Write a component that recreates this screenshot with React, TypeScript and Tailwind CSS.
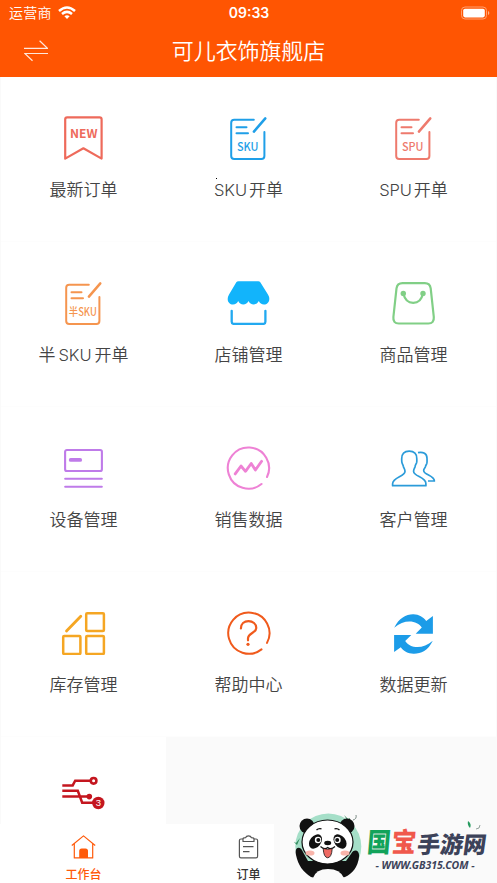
import type { ReactNode } from "react";

const CJK = "font-['Inter','Noto_Sans_CJK_SC',sans-serif]";

function NewOrderIcon() {
  return (
    <svg viewBox="0 0 45 44" className="w-[45px] h-[44px]" fill="none" stroke="#ee6a5b" strokeWidth="2.2" strokeLinejoin="round">
      <path d="M4.2 3.4q0-2 2-2h32.4q2 0 2 2V42.6L22.4 32.3 4.2 42.6Z" />
      <text
        x="9"
        y="21.8"
        fontSize="12"
        fontWeight="700"
        fill="#ee6a5b"
        stroke="none"
        textLength="27.5"
        lengthAdjust="spacingAndGlyphs"
        className="font-['Noto_Sans_CJK_SC',sans-serif]"
      >
        NEW
      </text>
    </svg>
  );
}

function FormIcon({ color, text, wide }: { color: string; text: string; wide?: boolean }) {
  return (
    <svg viewBox="0 0 45 44" className="w-[45px] h-[44px]" fill="none" stroke={color} strokeWidth="2" strokeLinecap="round">
      <path d="M27.8 3.7H8.2q-3 0-3 3V40q0 2.9 3 2.9h27.2q3 0 3-2.9V16" />
      <path d="M39.3 2.4 27.9 15.6" strokeWidth="2.5" />
      <path d="M10.5 11.2h10M10.5 17.3h11.5" />
      <text
        x={wide ? 7.8 : 11}
        y="35"
        fontSize={wide ? 11 : 11.2}
        fontWeight="500"
        fill={color}
        stroke="none"
        textLength={wide ? 28 : 21.5}
        lengthAdjust="spacingAndGlyphs"
        className="font-['Noto_Sans_CJK_SC',sans-serif]"
      >
        {text}
      </text>
    </svg>
  );
}

function StoreIcon() {
  return (
    <svg viewBox="0 0 45 44" className="w-[45px] h-[44px]" fill="none">
      <path
        fill="#12b4fb"
        d="M12.5.2h19.8q1.3 0 2 1.1l7.8 12.5q1.4 2.4 1.2 4.4c-.2 3.2-2.4 5.3-5.3 5.3-2.4 0-4.2-1.3-5.2-3.4-1 2.1-2.8 3.4-5.1 3.4s-4.2-1.3-5.2-3.4c-1 2.1-2.9 3.4-5.2 3.4s-4.1-1.3-5.1-3.4c-1 2.1-2.7 3.4-5.2 3.4-2.9 0-5.2-2.1-5.3-5.3q-.1-2 1.2-4.4l7.4-12.5q.7-1.1 2.2-1.1Z"
      />
      <path d="M5.7 29.8v11q0 2.1 2.1 2.1h29.5q2.1 0 2.1-2.1v-11" stroke="#22a9f0" strokeWidth="2.3" strokeLinecap="round" />
    </svg>
  );
}

function BagIcon() {
  return (
    <svg viewBox="0 0 45 44" className="w-[45px] h-[44px]" fill="none" stroke="#81cf86" strokeWidth="2.2">
      <path d="M11.5 2.2h22.3q5.2 0 5.9 5.2l3.1 28.6q.5 6.5-5.5 6.5H7.8q-6 0-5.4-6.5L5.5 7.4q.7-5.2 6-5.2Z" />
      <path d="M12.3 12.3c1.3 5.9 4.8 9.6 9.9 9.6s8.6-3.7 9.8-9.6" />
      <circle cx="12.3" cy="12.5" r="2.7" fill="#81cf86" stroke="none" />
      <circle cx="32" cy="12.5" r="2.7" fill="#81cf86" stroke="none" />
    </svg>
  );
}

function DeviceIcon() {
  return (
    <svg viewBox="0 0 45 44" className="w-[45px] h-[44px]" fill="none" stroke="#bf7be9" strokeWidth="2.1" strokeLinecap="round">
      <rect x="4.1" y="4" width="36.8" height="21" rx="1.8" />
      <path d="M9.7 13.9h9.5" strokeWidth="3.8" />
      <path d="M4.2 32.7h36.6M4.2 40.7h36.6" />
    </svg>
  );
}

function SalesIcon() {
  return (
    <svg viewBox="0 0 45 44" className="w-[45px] h-[44px]" fill="none" stroke="#ee82d5" strokeWidth="2.1" strokeLinecap="round">
      <path d="M35.5 38A20.6 20.6 0 1 1 41 31" />
      <path d="M9.2 27.9 15 20l4.5 5.3 5.7-7.8 4.2 6.5 6.2-8.7" strokeWidth="2.8" strokeLinejoin="round" />
    </svg>
  );
}

function CustomerIcon() {
  return (
    <svg viewBox="0 0 45 44" className="w-[45px] h-[44px]" fill="none" stroke="#2b9bd9" strokeWidth="1.7" strokeLinejoin="round">
      <path d="M18.2 5.2c5 0 7.8 2.6 7.6 7.5 0 1.6.2 2.6-.2 4-.5 1.5-1.2 2-1.5 3.8-.4 2-1.6 2.5-1.5 5 .1 5 12.5 5.5 12.3 12.2v2H1.6v-2c.1-6.5 12.3-7.2 12.4-12.2 0-2.5-1.2-3-1.6-5-.3-1.8-1-2.3-1.4-3.8-.4-1.4-.3-2.4-.3-4-.1-4.9 2.5-7.5 7.5-7.5Z" />
      <path d="M27 6.6c5.3-1.2 9 1.2 9 5.7 0 2 .3 3.8-.2 5.2-.5 1.3-1.1 1.7-1.4 3.2-.4 1.5-1.9 2-1.7 4 .2 4.2 10.7 4.8 10.7 10.3H37" />
    </svg>
  );
}

function StockIcon() {
  return (
    <svg viewBox="0 0 45 44" className="w-[45px] h-[44px]" fill="none" stroke="#f5a623" strokeWidth="2.5" strokeLinecap="round">
      <rect x="25.2" y="2.2" width="17.7" height="17.7" rx="1" />
      <rect x="2.2" y="25" width="17.2" height="18" rx="1" />
      <rect x="25.2" y="25" width="17.7" height="18" rx="1" />
      <path d="M19.8 5.2 5.5 20" strokeWidth="2.8" />
    </svg>
  );
}

function HelpIcon() {
  return (
    <svg viewBox="0 0 45 44" className="w-[45px] h-[44px]" fill="none" stroke="#f05a1c" strokeWidth="2" strokeLinecap="round">
      <path d="M35.5 38.4A20.6 20.6 0 1 1 41 31.9" />
      <path d="M14.9 17.5c0-4.5 3.3-7.3 7.6-7.3s7.8 2.6 7.8 6.7c0 5.3-8.3 5-8.3 10.6v1.8" strokeWidth="2.2" />
      <circle cx="22" cy="33.3" r="1.6" fill="#f05a1c" stroke="none" />
    </svg>
  );
}

function RefreshIcon() {
  return (
    <svg viewBox="0 0 45 44" className="w-[45px] h-[44px]" fill="#1c9ce8">
      <path d="M3.2 16.8C8 6.8 15.5 3 22.5 3.2c5.5.1 9.800 2.800 12.700 6.700L41.900 5v17.700H24.700l6.100-6.100C26.500 9.500 13.500 7.500 3.200 16.800Z" />
      <path d="M41.8 29.7C37 39.7 29.5 42.9 22.5 42.7c-5.5-.1-9.8-2.6-12.7-6.5L3.1 41.1V24.1h17.2l-6.1 5.8C18.5 37 31.5 39 41.8 29.7Z" />
    </svg>
  );
}

function CircuitIcon() {
  return (
    <svg viewBox="0 0 45 44" className="w-[45px] h-[44px]" fill="none" stroke="#c4161f" strokeWidth="2.5">
      <path d="M1.3 9.4h10.4l2.5-4.7H29M1.3 14.8h15.5l4.4 12H32M1.3 20.4h26" />
      <circle cx="32.6" cy="4.8" r="2.8" strokeWidth="2.6" />
      <circle cx="28.3" cy="20.6" r="2.8" fill="#c4161f" stroke="none" />
      <circle cx="37.3" cy="27" r="6.2" fill="#c4161f" stroke="none" />
      <text x="37.3" y="30.3" fontSize="9.5" textAnchor="middle" fill="#fff" stroke="none" className="font-['Liberation_Sans',sans-serif]">
        3
      </text>
    </svg>
  );
}

function PandaLogo() {
  return (
    <svg viewBox="0 0 72 70" className="w-[72px] h-[70px]">
      <circle cx="34.3" cy="36.5" r="33" fill="#a5dfc8" />
      <path d="M50 5l4 4 2-1-1 5M-1 31l3 2 4-5-3 7" fill="#2f8a5b" />
      <path d="M62 5q1 4-3 5" stroke="#7a8b85" fill="none" />
      <circle cx="13" cy="16" r="7.5" fill="#111" />
      <circle cx="53" cy="16" r="7.5" fill="#111" />
      <path d="M2 45c-2-9 5-9 7-3l5 9h38l5-7c3-6 9-4 8 3-1 10-7 17-14 20q-17 5-34 0C9 62 4 55 2 45Z" fill="#111" />
      <path d="M19 68q3-9 15-9t16 9q-16 5-31 0Z" fill="#fafafa" />
      <g transform="translate(-1 -1.5)">
        <ellipse cx="34.5" cy="33.5" rx="25.500" ry="22" fill="#fff" stroke="#111" strokeWidth="1.2" />
        <ellipse cx="22.5" cy="33" rx="5.5" ry="8" transform="rotate(38 22.5 33)" fill="#111" />
        <ellipse cx="47" cy="33" rx="5.5" ry="8" transform="rotate(-38 47 33)" fill="#111" />
        <circle cx="25" cy="31.5" r="3.2" fill="#fff" />
        <circle cx="44.5" cy="31.5" r="3.2" fill="#fff" />
        <circle cx="25.3" cy="31.5" r="2" fill="#111" />
        <circle cx="44.2" cy="31.5" r="2" fill="#111" />
        <path d="M23.5 21.5q2-2 5-1.2M41.5 20.3q3-.8 5 1.2" stroke="#111" strokeWidth="1.3" fill="none" />
        <ellipse cx="17" cy="44.5" rx="4.5" ry="2.6" fill="#f9b5ab" />
        <ellipse cx="52" cy="44.5" rx="4.5" ry="2.6" fill="#f9b5ab" />
        <ellipse cx="34.7" cy="34.5" rx="3.5" ry="2.2" fill="#111" />
        <path d="M27.5 38q4 3.5 7.2 1 3.3 2.5 7.3-1" stroke="#111" strokeWidth="1.2" fill="none" />
        <path d="M30.2 40q4.5 1.5 9 0-.5 9-4.5 9.300-4-.3-4.500-9.300Z" fill="#ef6a63" stroke="#111" strokeWidth=".8" />
      </g>
    </svg>
  );
}

const sku = (latin: string, tail: string, head?: string) => (
  <>
    {head}
    <span className={head ? "mx-[3px] text-[16.5px] tracking-[-0.1px]" : "mr-[2px] text-[16.5px] tracking-[-0.1px]"}>{latin}</span>
    {tail}
  </>
);

const items: { icon: ReactNode; label: ReactNode; dot?: boolean }[] = [
  { icon: <NewOrderIcon />, label: "最新订单" },
  { icon: <FormIcon color="#1f9fe8" text="SKU" />, label: sku("SKU", "开单"), dot: true },
  { icon: <FormIcon color="#ee7a6d" text="SPU" />, label: sku("SPU", "开单") },
  { icon: <FormIcon color="#f5954f" text="半SKU" wide />, label: sku("SKU", "开单", "半") },
  { icon: <StoreIcon />, label: "店铺管理" },
  { icon: <BagIcon />, label: "商品管理" },
  { icon: <DeviceIcon />, label: "设备管理" },
  { icon: <SalesIcon />, label: "销售数据" },
  { icon: <CustomerIcon />, label: "客户管理" },
  { icon: <StockIcon />, label: "库存管理" },
  { icon: <HelpIcon />, label: "帮助中心" },
  { icon: <RefreshIcon />, label: "数据更新" },
  { icon: <CircuitIcon />, label: "" },
];

function Header() {
  return (
    <header className="h-[77px] shrink-0 bg-[#ff5502] text-white">
      <div className="h-[26px] grid grid-cols-3 items-center pl-[9px] pr-[7px]">
        <div className="flex items-center gap-[6px] text-[14px] leading-[26px] font-[350] tracking-[0.2px]">
          <span>运营商</span>
          <svg viewBox="0 0 18 13" className="w-[18px] h-[13px] -mt-[2px]" fill="none" stroke="#fff" strokeWidth="2.5">
            <path d="M1 5q8-7 16 0M4 8q5-4.2 10 0" />
            <path d="M6.4 10.2q2.6-2 5.2 0L9 13Z" fill="#fff" stroke="none" />
          </svg>
        </div>
        <div className="text-center text-[14px] leading-[26px] font-semibold -ml-[1px]">09:33</div>
        <svg viewBox="0 0 30 14" className="w-[30px] h-[14px] justify-self-end -mt-[1px]">
          <rect x="1.5" y="1" width="25" height="12" rx="3.5" fill="none" stroke="#ffa070" strokeWidth="1" />
          <rect x="3.2" y="2.8" width="21.6" height="8.6" rx="1.8" fill="#fff" />
          <path d="M28 5v4q1.3-.7 1.3-2T28 5Z" fill="#ffb38c" />
        </svg>
      </div>
      <div className="h-[50px] grid grid-cols-[60px_1fr_60px] items-center">
        <svg viewBox="0 0 24 22" className="w-[24px] h-[22px] ml-[24px]" fill="none" stroke="#ffe8dc" strokeWidth="1.2">
          <path d="M0 8.4h23.5L15.6.8M24 13.5H.8l7.7 7.3" />
        </svg>
        <h1 className="text-center text-[22px] leading-[48px] font-[350] tracking-[-0.1px]">可儿衣饰旗舰店</h1>
      </div>
    </header>
  );
}

function TabBar() {
  return (
    <nav className="h-[59px] shrink-0 grid grid-cols-3 px-[1px] bg-white text-[12px] leading-[16px] font-medium">
      <div className="flex flex-col items-center pt-[11px] text-[#ff5a0a]">
        <svg viewBox="0 0 25 24" className="w-[25px] h-[24px] mb-[8px]" fill="none" stroke="#ff5a0a" strokeWidth="1.2" strokeLinejoin="round">
          <path d="M.8 10.5 12.5.9l11.7 9.6M3.3 8.7v14.2h18.4V8.7" />
          <path d="M8.2 23v-7q0-2.5 2.5-2.5h3.8q2.5 0 2.5 2.5v7Z" fill="#ff5a0a" stroke="none" />
        </svg>
        工作台
      </div>
      <div className="flex flex-col items-center pt-[11px] text-[#333]">
        <svg viewBox="0 0 21 24" className="w-[21px] h-[24px] mb-[8px]" fill="none" stroke="#555" strokeWidth="1.2" strokeLinejoin="round">
          <path d="M5 4H3Q1.4 4 1.4 5.6v15.6q0 1.6 1.6 1.6h15q1.6 0 1.6-1.6V5.6Q19.6 4 18 4h-2" />
          <path d="M5 6.5V4q0-1.2 2.5-1.3Q8.3.8 10.5.8t3 1.9Q16 2.8 16 4v2.5ZM5 11.7h10.500M5 16.700h6.500" />
        </svg>
        订单
      </div>
    </nav>
  );
}

function SiteBadge() {
  return (
    <div className="absolute right-0 bottom-0 w-[223px] h-[73px] flex items-end">
      <div className="absolute right-0 bottom-0 w-full h-[59px] bg-[#fafafa]" />
      <div className="relative ml-[20px] mb-[3px] shrink-0">
        <PandaLogo />
      </div>
      <div className="relative h-[60px] w-[124px] ml-[1px] shrink-0">
        <svg viewBox="0 0 124 60" className="w-[124px] h-[60px] overflow-visible font-['Noto_Sans_CJK_SC',sans-serif]" fontWeight="900">
          <path d="M101-2q4 3 2 7-3-3-2-7Z" fill="#279b60" />
          <path d="M113 2q0 4-4 4" fill="none" stroke="#7a8b85" strokeWidth=".8" />
          <g transform="skewX(-5)">
            <text x="2" y="29" fontSize="27" fill="#12a35a" textLength="23.5" lengthAdjust="spacingAndGlyphs">国</text>
            <text x="26.5" y="29" fontSize="27" fill="#f0584c" textLength="24.5" lengthAdjust="spacingAndGlyphs">宝</text>
          </g>
          <text x="53.5" y="30" fontSize="23" fill="#3c4259" transform="skewX(-8)" textLength="69">手游网</text>
        </svg>
        <div className="absolute left-[7px] top-[35px] w-[102px] flex justify-center whitespace-nowrap text-[10.5px] leading-[14px] font-bold italic text-[#3c4259] font-['Noto_Sans',sans-serif]">
          - WWW.GB315.COM -
        </div>
      </div>
    </div>
  );
}

export default function App() {
  return (
    <div className={`relative w-[497px] h-[883px] flex flex-col overflow-hidden bg-[#fafafa] ${CJK}`}>
      <Header />
      <main className="flex-1 min-h-0 overflow-hidden">
        <div className="grid grid-cols-3 auto-rows-[165px] px-[1px]">
          {items.map((item, i) => (
            <div key={i} className="relative flex flex-col items-center pt-[39px] bg-white border-b border-[#fdfdfd]">
              {item.icon}
              <div className="mt-[17px] h-[26px] flex items-center text-[17px] leading-[26px] font-[350] text-[#444] whitespace-nowrap">
                {item.label}
              </div>
              {item.dot && <span className="absolute left-[50px] top-[101px] w-px h-px bg-black" />}
            </div>
          ))}
        </div>
      </main>
      <TabBar />
      <SiteBadge />
    </div>
  );
}
